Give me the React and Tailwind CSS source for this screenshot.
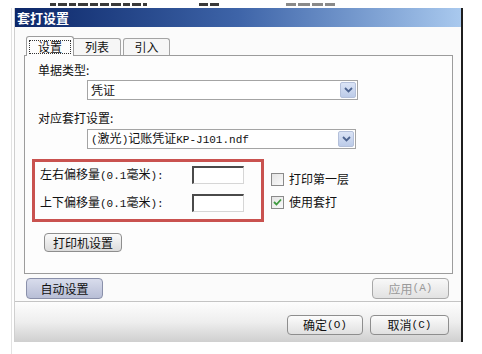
import React from "react";

const CN = "font-['Noto_Sans_CJK_SC',sans-serif]";
const MONO = "font-['Liberation_Mono',monospace] text-[11px]";

function Btn({ children, className = "" }) {
  return (
    <div
      className={`flex items-center justify-center rounded-[4px] border text-[12px] leading-none ${className}`}
    >
      {children}
    </div>
  );
}

function Select({ width, children }) {
  return (
    <div
      className="flex items-center h-[20px] border border-[#a4a4a4] bg-white ml-[62px] pl-[3px] pr-px"
      style={{ width }}
    >
      <div className="flex-1 text-[12px] leading-none text-[#111] whitespace-nowrap">{children}</div>
      <div className="w-[16px] h-[16px] rounded-[2px] border border-[#b4c0da] bg-linear-to-b from-[#dbe4f6] to-[#bccbe8] flex items-center justify-center">
        <svg width="9" height="6" viewBox="0 0 9 6">
          <path d="M1 1 L4.5 4.5 L8 1" fill="none" stroke="#4d6490" strokeWidth="1.8" />
        </svg>
      </div>
    </div>
  );
}

function Input() {
  return (
    <div className="w-[52px] h-[18px] bg-white border-t-2 border-l-2 border-t-[#4a4a4a] border-l-[#4a4a4a] border-r border-b border-r-[#d6d6d6] border-b-[#d6d6d6]" />
  );
}

function Check({ checked, label }) {
  return (
    <div className="flex items-center h-[18px]">
      <div className="w-[13px] h-[13px] border border-[#8a8a8a] bg-linear-to-br from-[#e4e4e4] to-[#fafafa] flex items-center justify-center">
        {checked && (
          <svg width="9" height="8" viewBox="0 0 9 8">
            <path d="M1 4 L3.5 6.5 L8 1.5" fill="none" stroke="#3f9a3f" strokeWidth="1.8" />
          </svg>
        )}
      </div>
      <span className="ml-[5px] text-[12px] text-[#111]">{label}</span>
    </div>
  );
}

function Frag({ w, dark = true }) {
  return <div className={`h-[3px] ${dark ? "bg-[#3a3a3a]" : "bg-[#8a8a8a]"}`} style={{ width: w }} />;
}

export default function App() {
  return (
    <div className={`w-[482px] h-[354px] bg-white overflow-hidden ${CN}`}>
      {/* bottom edges of a window behind, cut off */}
      <div className="h-[8px] flex items-start pt-[3px]">
        <div className="ml-[50px] flex gap-[2px]">
          <Frag w={6} />
          <Frag w={9} />
          <Frag w={7} />
          <Frag w={10} />
          <Frag w={8} />
          <Frag w={9} />
          <Frag w={10} />
          <Frag w={7} />
          <Frag w={9} />
          <Frag w={4} />
        </div>
        <div className="ml-[52px] flex gap-[2px]">
          <Frag w={9} />
          <Frag w={9} />
        </div>
        <div className="ml-[67px] flex gap-[2px]">
          <Frag w={10} dark={false} />
          <Frag w={12} dark={false} />
          <Frag w={11} dark={false} />
          <Frag w={10} dark={false} />
        </div>
      </div>

      <div className="flex">
        <div className="w-[11px]" />
        <div className="w-px h-[346px] bg-[#e2e2e2]" />
        <div className="w-[2px]" />

        {/* dialog */}
        <div className="w-[449px] h-[334px] flex flex-col border-l border-[#cfcfcf] border-r-2 border-r-[#1e1e1e]">
          {/* title bar */}
          <div className="h-[19px] bg-linear-to-r from-[#0c2668] via-[#3e64a8] to-[#a9c9ee] flex items-center pl-[2px]">
            <span className="text-white text-[13px] font-bold leading-none">套打设置</span>
          </div>

          {/* body */}
          <div className="h-[275px] bg-[#fbfbfb] border-b border-[#c4c4c4] pt-[9px]">
            {/* tabs */}
            <div className="flex items-end h-[19px] pl-[11px]">
              <div className="relative z-10 w-[48px] h-[20px] -mb-px bg-[#fdfdfd] border border-b-0 border-[#9c9c9c] rounded-t-[3px] flex items-center justify-center">
                <span className="border border-dotted border-[#333] px-[8px] text-[12px] leading-[12px] text-[#111]">设置</span>
              </div>
              <div className="w-[47px] h-[17px] bg-[#f6f6f6] border border-b-0 border-l-0 border-[#a4a4a4] rounded-tr-[3px] flex items-center justify-center text-[12px] text-[#111]">
                列表
              </div>
              <div className="ml-[2px] w-[47px] h-[17px] bg-[#f6f6f6] border border-b-0 border-[#a4a4a4] rounded-t-[3px] flex items-center justify-center text-[12px] text-[#111]">
                引入
              </div>
            </div>

            {/* panel */}
            <div className="ml-[9px] w-[429px] h-[219px] border border-[#9c9c9c] bg-[#fdfdfd] flex flex-col">
              <div className="mt-[6px] pl-[13px] text-[12px] leading-[16px] text-[#111]">单据类型:</div>
              <div className="mt-[2px]">
                <Select width={271}>凭证</Select>
              </div>
              <div className="mt-[10px] pl-[13px] text-[12px] leading-[16px] text-[#111]">对应套打设置:</div>
              <div className="mt-[3px]">
                <Select width={269}>
                  <span className={MONO}>(</span>激光<span className={MONO}>)</span>记账凭证
                  <span className={MONO}>KP-J101.ndf</span>
                </Select>
              </div>

              <div className="mt-[10px] ml-[7px] flex items-start">
                <div className="w-[232px] h-[63px] border-[3px] border-[#c9524f] pt-[4px] pl-[5px] flex flex-col gap-[10px]">
                  <div className="flex items-center h-[18px]">
                    <span className="w-[152px] text-[12px] text-[#111] whitespace-nowrap">
                      左右偏移量<span className={MONO}>(0.1</span>毫米<span className={MONO}>):</span>
                    </span>
                    <Input />
                  </div>
                  <div className="flex items-center h-[18px]">
                    <span className="w-[152px] text-[12px] text-[#111] whitespace-nowrap">
                      上下偏移量<span className={MONO}>(0.1</span>毫米<span className={MONO}>):</span>
                    </span>
                    <Input />
                  </div>
                </div>
                <div className="ml-[7px] pt-[11px] flex flex-col gap-[5px]">
                  <Check label="打印第一层" />
                  <Check checked label="使用套打" />
                </div>
              </div>

              <div className="mt-[11px] ml-[19px]">
                <Btn className="w-[78px] h-[19px] border-[#8e8e8e] bg-linear-to-b from-[#fafafa] to-[#dcdcdc] text-[#111]">
                  打印机设置
                </Btn>
              </div>
            </div>

            {/* auto / apply row */}
            <div className="mt-[4px] flex justify-between pl-[11px] pr-[12px]">
              <Btn className="w-[77px] h-[21px] border-[#8a90aa] bg-linear-to-b from-[#d8dcec] to-[#b8bed6] text-[#111]">
                自动设置
              </Btn>
              <Btn className="w-[77px] h-[21px] border-[#a8a8a8] bg-linear-to-b from-[#f8f8f8] to-[#e2e2e2] text-[#9a9a9a]">
                应用<span className={MONO}>(A)</span>
              </Btn>
            </div>
          </div>

          {/* bottom */}
          <div className="flex-1 bg-linear-to-b from-[#fdfdfd] via-[#eeeeee] to-[#cfcfcf] flex justify-end items-start pt-[13px] pr-[12px] gap-[7px]">
            <Btn className="w-[76px] h-[20px] border-[#8e8e8e] bg-linear-to-b from-[#fcfcfc] to-[#e0e0e0] text-[#111]">
              确定<span className={MONO}>(O)</span>
            </Btn>
            <Btn className="w-[79px] h-[20px] border-[#8e8e8e] bg-linear-to-b from-[#fcfcfc] to-[#e0e0e0] text-[#111]">
              取消<span className={MONO}>(C)</span>
            </Btn>
          </div>
        </div>
      </div>
    </div>
  );
}
